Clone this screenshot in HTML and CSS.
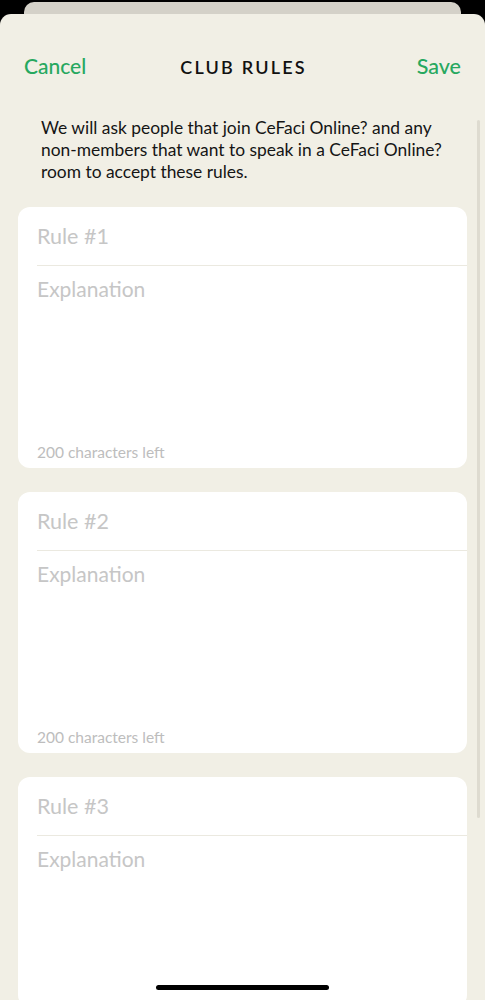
FILE: index.html
```html
<!DOCTYPE html>
<html>
<head>
<meta charset="utf-8">
<link rel="stylesheet" href="styles.css">
</head>
<body>
<div class="back-card"></div>
<div class="sheet">
  <header class="header">
    <span class="action">Cancel</span>
    <span class="title">CLUB RULES</span>
    <span class="action action-right">Save</span>
  </header>
  <p class="intro">We will ask people that join CeFaci Online? and any non-members that want to speak in a CeFaci Online? room to accept these rules.</p>
  <div class="rules">
    <section class="rule-card">
      <div class="rule-title">Rule #1</div>
      <div class="divider"></div>
      <div class="rule-expl">Explanation</div>
      <div class="rule-count">200 characters left</div>
    </section>
    <section class="rule-card">
      <div class="rule-title">Rule #2</div>
      <div class="divider"></div>
      <div class="rule-expl">Explanation</div>
      <div class="rule-count">200 characters left</div>
    </section>
    <section class="rule-card rule-card-last">
      <div class="rule-title">Rule #3</div>
      <div class="divider"></div>
      <div class="rule-expl">Explanation</div>
    </section>
  </div>
  <div class="scrollbar"></div>
</div>
<div class="home-indicator"></div>
</body>
</html>
```

FILE: styles.css
```css
html, body {
  margin: 0;
  padding: 0;
}
body {
  background: #000;
  font-family: "Lato", "Noto Sans", sans-serif;
  width: 485px;
  height: 1000px;
  overflow: hidden;
  position: relative;
}
.back-card {
  margin: 2px 24px 0;
  height: 12px;
  background: #d4d1c8;
  border-radius: 10px 10px 0 0;
}
.sheet {
  position: relative;
  background: #f1efe5;
  border-radius: 11px 11px 0 0;
  padding-top: 34px;
  height: 986px;
  box-sizing: border-box;
  overflow: hidden;
}
.header {
  height: 36px;
  display: grid;
  grid-template-columns: 1fr auto 1fr;
  align-items: baseline;
  align-content: center;
  padding: 0 24px;
}
.action {
  color: #27a85f;
  font-size: 21px;
  font-weight: 500;
}
.action-right {
  justify-self: end;
  font-size: 21.5px;
}
.title {
  color: #111;
  font-size: 18px;
  font-weight: 600;
  letter-spacing: 2.2px;
  margin-left: 2px;
}
.intro {
  margin: 33px 0 0;
  padding: 0 30px 0 41px;
  font-size: 17.4px;
  line-height: 22px;
  color: #151515;
}
.rules {
  display: flex;
  flex-direction: column;
  gap: 24px;
  margin: 24px 18px 0;
}
.rule-card {
  background: #fff;
  border-radius: 12px;
  height: 261px;
  display: flex;
  flex-direction: column;
}
.rule-card-last {
  height: 230px;
}
.rule-title {
  height: 58px;
  display: flex;
  align-items: center;
  padding-left: 19px;
  font-size: 21.5px;
  color: #c6c6c6;
}
.divider {
  height: 1px;
  margin-left: 19px;
  background: #ebe9e0;
}
.rule-expl {
  flex: 1;
  padding: 10px 0 0 19px;
  font-size: 21px;
  line-height: 26px;
  color: #c6c6c6;
}
.rule-count {
  padding: 0 0 7px 19px;
  font-size: 15.5px;
  line-height: 18px;
  color: #bdbdbd;
}
.scrollbar {
  position: absolute;
  right: 5px;
  top: 106px;
  width: 3px;
  height: 698px;
  border-radius: 2px;
  background: #dedbd0;
}
.home-indicator {
  position: absolute;
  left: 156px;
  bottom: 10px;
  width: 173px;
  height: 5px;
  border-radius: 3px;
  background: #000;
}
```
